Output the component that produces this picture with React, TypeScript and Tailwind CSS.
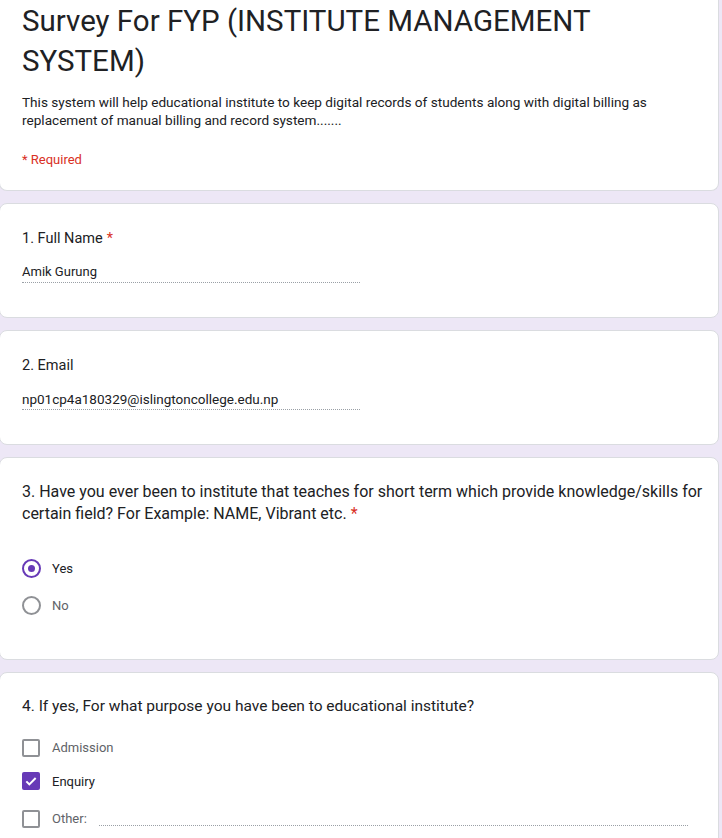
import { useState } from "react"

const font = { fontFamily: "Roboto, 'Liberation Sans', sans-serif" }

function Card({ children, className = "" }: { children: React.ReactNode; className?: string }) {
  return (
    <div className={`ml-[-1px] rounded-lg border border-[#dadce0] bg-white px-[22px] ${className}`}>{children}</div>
  )
}

function Required() {
  return <span className="ml-[4px] text-[#d93025]">*</span>
}

function Radio({ checked, label, onClick }: { checked: boolean; label: string; onClick: () => void }) {
  return (
    <button type="button" onClick={onClick} className="flex h-[37px] items-center gap-[11px] text-left">
      <span
        className={`flex h-[19px] w-[19px] items-center justify-center rounded-full border-2 ${
          checked ? "border-[#673ab7]" : "border-[#5f6368]/70"
        }`}
      >
        {checked && <span className="h-[7px] w-[7px] rounded-full bg-[#673ab7]" />}
      </span>
      <span className={`text-[13px] ${checked ? "text-[#202124]" : "text-[#5f6368]"}`}>{label}</span>
    </button>
  )
}

function Check({ checked, label, onClick }: { checked: boolean; label: string; onClick: () => void }) {
  return (
    <button type="button" onClick={onClick} className="flex items-center gap-[12px] text-left">
      <span
        className={`flex h-[18px] w-[18px] items-center justify-center rounded-[2px] ${
          checked ? "bg-[#673ab7]" : "border-2 border-[#5f6368]/70"
        }`}
      >
        {checked && (
          <svg viewBox="0 0 24 24" className="h-[16px] w-[16px]" fill="none" stroke="white" strokeWidth="3">
            <path d="M5 12.5l4.5 4.5L19 7.5" />
          </svg>
        )}
      </span>
      <span className={`text-[13px] ${checked ? "text-[#202124]" : "text-[#5f6368]"}`}>{label}</span>
    </button>
  )
}

export default function App() {
  const [answer, setAnswer] = useState("Yes")
  const [purposes, setPurposes] = useState<string[]>(["Enquiry"])

  const toggle = (p: string) =>
    setPurposes((prev) => (prev.includes(p) ? prev.filter((x) => x !== p) : [...prev, p]))

  return (
    <div className="min-h-screen overflow-hidden bg-[#ede7f6] pr-[3px] pb-6" style={font}>
      <div className="flex flex-col gap-[12px]">
        {/* header */}
        <div className="ml-[-1px] rounded-b-lg border border-t-0 border-[#dadce0] bg-white px-[22px] pb-[21px] pt-[1px]">
          <h1 className="text-[29.5px] leading-[40px] text-[#202124]">Survey For FYP (INSTITUTE MANAGEMENT SYSTEM)</h1>
          <p className="mt-[12px] text-[13.6px] leading-[18px] text-[#202124]">
            This system will help educational institute to keep digital records of students along with digital billing as
            replacement of manual billing and record system.......
          </p>
          <p className="mt-[22px] text-[13px] leading-[18px] text-[#d93025]">* Required</p>
        </div>

        <Card className="h-[115px] pt-[23px]">
          <div className="text-[14.5px] leading-[24px] text-[#202124]">
            1. Full Name
            <Required />
          </div>
          <div className="mt-[11px] w-[338px] border-b border-dotted border-[#9aa0a6] text-[13px] leading-[20px] text-[#202124]">
            Amik Gurung
          </div>
        </Card>

        <Card className="h-[115px] pt-[23px]">
          <div className="text-[14.5px] leading-[24px] text-[#202124]">2. Email</div>
          <div className="mt-[11px] w-[338px] border-b border-dotted border-[#9aa0a6] text-[13.5px] leading-[20px] text-[#202124]">
            np01cp4a180329@islingtoncollege.edu.np
          </div>
        </Card>

        <Card className="h-[203px] pt-[23px]">
          <div className="mr-[-14px] text-[16px] leading-[22px] text-[#202124]">
            3. Have you ever been to institute that teaches for short term which provide knowledge/skills for certain
            field? For Example: NAME, Vibrant etc.
            <Required />
          </div>
          <div className="mt-[25px] flex flex-col">
            {["Yes", "No"].map((o) => (
              <Radio key={o} label={o} checked={answer === o} onClick={() => setAnswer(o)} />
            ))}
          </div>
        </Card>

        <Card className="pt-[21px] pb-6">
          <div className="text-[15.5px] leading-[24px] text-[#202124]">
            4. If yes, For what purpose you have been to educational institute?
          </div>
          <div className="mt-[20px] flex flex-col">
            <Check label="Admission" checked={purposes.includes("Admission")} onClick={() => toggle("Admission")} />
            <div className="mt-[14px]">
              <Check label="Enquiry" checked={purposes.includes("Enquiry")} onClick={() => toggle("Enquiry")} />
            </div>
            <div className="mt-[18px] flex items-center">
              <Check label="Other:" checked={purposes.includes("Other")} onClick={() => toggle("Other")} />
              <div className="ml-[12px] mr-[8px] mt-[14px] flex-1 border-b border-dotted border-[#9aa0a6]" />
            </div>
          </div>
        </Card>
      </div>
    </div>
  )
}
